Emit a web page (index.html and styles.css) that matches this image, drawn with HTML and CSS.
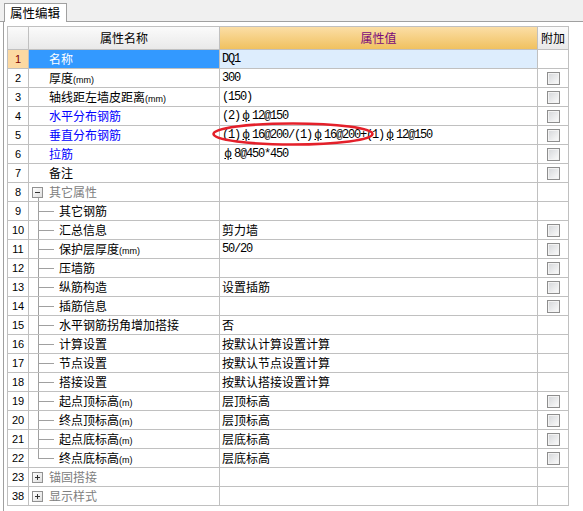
FILE: index.html
```html
<!DOCTYPE html>
<html lang="zh-CN">
<head>
<meta charset="utf-8">
<title>属性编辑</title>
<link rel="stylesheet" href="styles.css">
</head>
<body>
<div class="tabbar"><div class="tab">属性编辑</div></div>
<div class="panel">
  <div class="grid">
    <div class="row head">
      <div class="c num"></div>
      <div class="c name">属性名称</div>
      <div class="c val">属性值</div>
      <div class="c add">附加</div>
    </div>
    <div class="row sel">
      <div class="c num">1</div>
      <div class="c name">名称</div>
      <div class="c val">DQ1</div>
      <div class="c add"></div>
    </div>
    <div class="row">
      <div class="c num">2</div>
      <div class="c name">厚度<span class="unit">(mm)</span></div>
      <div class="c val">300</div>
      <div class="c add"><span class="cb"></span></div>
    </div>
    <div class="row">
      <div class="c num">3</div>
      <div class="c name">轴线距左墙皮距离<span class="unit">(mm)</span></div>
      <div class="c val">(150)</div>
      <div class="c add"><span class="cb"></span></div>
    </div>
    <div class="row">
      <div class="c num">4</div>
      <div class="c name blue">水平分布钢筋</div>
      <div class="c val">(2)<span class="rb">ф</span>12@150</div>
      <div class="c add"><span class="cb"></span></div>
    </div>
    <div class="row">
      <div class="c num">5</div>
      <div class="c name blue">垂直分布钢筋</div>
      <div class="c val">(1)<span class="rb">ф</span>16@200/(1)<span class="rb">ф</span>16@200+(1)<span class="rb">ф</span>12@150</div>
      <div class="c add"><span class="cb"></span></div>
    </div>
    <div class="row">
      <div class="c num">6</div>
      <div class="c name blue">拉筋</div>
      <div class="c val"><span class="rb">ф</span>8@450*450</div>
      <div class="c add"><span class="cb"></span></div>
    </div>
    <div class="row">
      <div class="c num">7</div>
      <div class="c name">备注</div>
      <div class="c val"></div>
      <div class="c add"><span class="cb"></span></div>
    </div>
    <div class="row">
      <div class="c num">8</div>
      <div class="c name grp open"><span class="exp minus"></span>其它属性</div>
      <div class="c val"></div>
      <div class="c add"></div>
    </div>
    <div class="row">
      <div class="c num">9</div>
      <div class="c name leaf">其它钢筋</div>
      <div class="c val"></div>
      <div class="c add"></div>
    </div>
    <div class="row">
      <div class="c num">10</div>
      <div class="c name leaf">汇总信息</div>
      <div class="c val zh">剪力墙</div>
      <div class="c add"><span class="cb"></span></div>
    </div>
    <div class="row">
      <div class="c num">11</div>
      <div class="c name leaf">保护层厚度<span class="unit">(mm)</span></div>
      <div class="c val">50/20</div>
      <div class="c add"><span class="cb"></span></div>
    </div>
    <div class="row">
      <div class="c num">12</div>
      <div class="c name leaf">压墙筋</div>
      <div class="c val"></div>
      <div class="c add"><span class="cb"></span></div>
    </div>
    <div class="row">
      <div class="c num">13</div>
      <div class="c name leaf">纵筋构造</div>
      <div class="c val zh">设置插筋</div>
      <div class="c add"><span class="cb"></span></div>
    </div>
    <div class="row">
      <div class="c num">14</div>
      <div class="c name leaf">插筋信息</div>
      <div class="c val"></div>
      <div class="c add"><span class="cb"></span></div>
    </div>
    <div class="row">
      <div class="c num">15</div>
      <div class="c name leaf">水平钢筋拐角增加搭接</div>
      <div class="c val zh">否</div>
      <div class="c add"></div>
    </div>
    <div class="row">
      <div class="c num">16</div>
      <div class="c name leaf">计算设置</div>
      <div class="c val zh">按默认计算设置计算</div>
      <div class="c add"></div>
    </div>
    <div class="row">
      <div class="c num">17</div>
      <div class="c name leaf">节点设置</div>
      <div class="c val zh">按默认节点设置计算</div>
      <div class="c add"></div>
    </div>
    <div class="row">
      <div class="c num">18</div>
      <div class="c name leaf">搭接设置</div>
      <div class="c val zh">按默认搭接设置计算</div>
      <div class="c add"></div>
    </div>
    <div class="row">
      <div class="c num">19</div>
      <div class="c name leaf">起点顶标高<span class="unit">(m)</span></div>
      <div class="c val zh">层顶标高</div>
      <div class="c add"><span class="cb"></span></div>
    </div>
    <div class="row">
      <div class="c num">20</div>
      <div class="c name leaf">终点顶标高<span class="unit">(m)</span></div>
      <div class="c val zh">层顶标高</div>
      <div class="c add"><span class="cb"></span></div>
    </div>
    <div class="row">
      <div class="c num">21</div>
      <div class="c name leaf">起点底标高<span class="unit">(m)</span></div>
      <div class="c val zh">层底标高</div>
      <div class="c add"><span class="cb"></span></div>
    </div>
    <div class="row">
      <div class="c num">22</div>
      <div class="c name leaf last">终点底标高<span class="unit">(m)</span></div>
      <div class="c val zh">层底标高</div>
      <div class="c add"><span class="cb"></span></div>
    </div>
    <div class="row">
      <div class="c num">23</div>
      <div class="c name grp"><span class="exp plus"></span>锚固搭接</div>
      <div class="c val"></div>
      <div class="c add"></div>
    </div>
    <div class="row">
      <div class="c num">38</div>
      <div class="c name grp"><span class="exp plus"></span>显示样式</div>
      <div class="c val"></div>
      <div class="c add"></div>
    </div>
  </div>
</div>
<svg class="mark" width="164" height="26" viewBox="0 0 164 26"><ellipse cx="82" cy="13" rx="79.5" ry="10.5" fill="none" stroke="#e4202a" stroke-width="2.6"/></svg>
</body>
</html>
```
FILE: styles.css
```css
html, body {
  margin: 0;
  padding: 0;
}
body {
  background: #ffffff;
  font-family: "Noto Sans CJK SC", "Liberation Sans", sans-serif;
  font-size: 12px;
  color: #000;
  min-height: 511px;
}
.tabbar {
  height: 21px;
  background: #f0f0f0;
  border-bottom: 1px solid #a0a0a0;
  padding-left: 4px;
  display: flex;
  align-items: flex-end;
}
.tab {
  height: 19px;
  box-sizing: border-box;
  border: 1px solid #a0a0a0;
  border-bottom: none;
  background: #fff;
  padding: 0 6px 0 5px;
  line-height: 17px;
  font-size: 12.5px;
  margin-bottom: -1px;
}
.panel {
  margin-left: 3px;
  border-left: 1px solid #a0a0a0;
  padding: 4px 0 5px 3px;
}
.grid {
  width: 562px;
  box-sizing: border-box;
  border-left: 1px solid #c0c0c0;
  border-top: 1px solid #c0c0c0;
}
.row {
  display: grid;
  grid-template-columns: 21px 191px 318px 31px;
  height: 19px;
}
.c {
  box-sizing: border-box;
  border-right: 1px solid #c0c0c0;
  border-bottom: 1px solid #c0c0c0;
  line-height: 18px;
  white-space: nowrap;
  overflow: hidden;
}
.num {
  text-align: center;
  font-family: "Liberation Sans", sans-serif;
  font-size: 11px;
}
.name {
  padding-left: 20px;
}
.unit {
  font-family: "Liberation Sans", sans-serif;
  font-size: 9px;
}
.blue {
  color: #0000ff;
}
.val {
  padding-left: 2px;
  font-family: "Liberation Mono", monospace;
  font-size: 12px;
  letter-spacing: -1.2px;
}
.val.zh {
  font-family: "Noto Sans CJK SC", sans-serif;
  font-size: 12px;
  letter-spacing: 0;
}
.rb {
  display: inline-block;
  width: 12px;
  text-align: center;
  letter-spacing: 0;
  text-decoration: underline;
}
.add {
  display: flex;
  justify-content: center;
  align-items: flex-start;
  padding-top: 3px;
}
.cb {
  display: block;
  width: 13px;
  height: 13px;
  box-sizing: border-box;
  border: 1px solid #8e8e8e;
  background: linear-gradient(135deg, #d4d6d9, #fcfcfc);
  box-shadow: inset 0 0 0 1px #f3f3f3;
}

/* header */
.row.head {
  height: 23px;
}
.head .c {
  line-height: 22px;
  text-align: center;
  padding: 0;
  background: linear-gradient(#fbfbfb, #e9e9e9);
  font-family: "Noto Sans CJK SC", sans-serif;
  font-size: 12px;
  letter-spacing: 0;
}
.head .val {
  background: linear-gradient(#fbdea6, #f0c15f);
  color: #7a0a7a;
}
.head .add {
  display: block;
}

/* selected row */
.sel .num {
  background: #fcd9a2;
  color: #800000;
}
.sel .name {
  background: #3399ff;
  color: #fff;
}
.sel .val {
  background: #ddedfd;
}

/* tree */
.grp {
  display: flex;
  align-items: center;
  gap: 6px;
  padding-left: 3px;
  color: #808080;
}
.grp.open {
  background-image: linear-gradient(#a0a0a0, #a0a0a0);
  background-size: 1px 4px;
  background-position: 9px 15px;
  background-repeat: no-repeat;
}
.exp {
  width: 11px;
  height: 11px;
  box-sizing: border-box;
  border: 1px solid #919191;
  background: linear-gradient(135deg, #ffffff, #dedede);
  display: grid;
  place-items: center;
  flex: none;
}
.exp::before {
  content: "";
  grid-area: 1 / 1;
  width: 5px;
  height: 1px;
  background: #333;
}
.exp.plus::after {
  content: "";
  grid-area: 1 / 1;
  width: 1px;
  height: 5px;
  background: #333;
}
.leaf {
  padding-left: 30px;
  background-image: linear-gradient(#a0a0a0, #a0a0a0), linear-gradient(#a0a0a0, #a0a0a0);
  background-size: 1px 100%, 16px 1px;
  background-position: 9px 0, 9px 9px;
  background-repeat: no-repeat;
}
.leaf.last {
  background-size: 1px 10px, 16px 1px;
}

.mark {
  position: absolute;
  left: 211px;
  top: 121px;
}
```
